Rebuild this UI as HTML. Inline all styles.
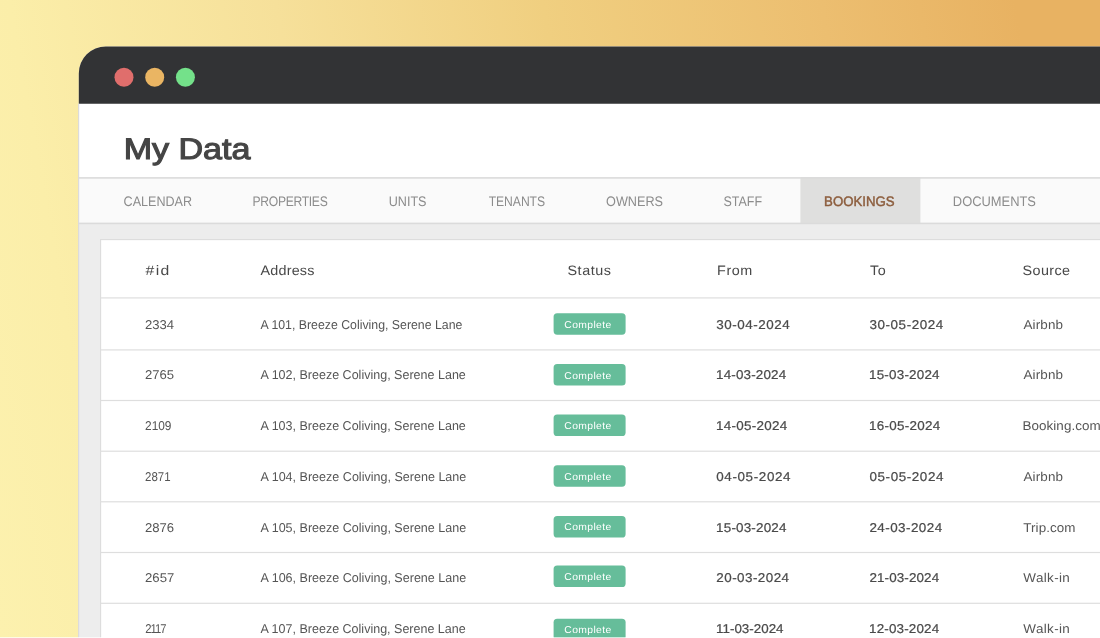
<!DOCTYPE html>
<html lang="en">
<head>
<meta charset="utf-8">
<title>My Data</title>
<style>
*{box-sizing:border-box;margin:0;padding:0}
html,body{width:1100px;height:638px;overflow:hidden}
body{position:relative;font-family:"Liberation Sans",sans-serif;background:linear-gradient(80deg,#fcf1ae 0%,#fbeea9 10%,#f6e09a 32%,#f0cf80 54%,#ecbe70 77%,#e8b262 93%,#e8b262 100%)}
.shapes{position:absolute;left:0;top:0;width:1100px;height:638px;display:block}
.txt{position:absolute;left:0;top:0;width:1100px;height:638px;will-change:transform}
.t{position:absolute;white-space:nowrap;line-height:1;transform-origin:0 0;font-weight:400;text-rendering:geometricPrecision}
.h1{font-size:29.8px;font-weight:400;color:#454545;-webkit-text-stroke:1.1px #454545}
.tab{font-size:13.8px;color:#8c8c8c}
.tab.on{font-weight:400;color:#8c5d3d;-webkit-text-stroke:0.45px #8c5d3d}
.th{font-size:13.7px;color:#484848}
.td{font-size:12.8px;color:#555555}
.dt{font-size:12.8px;color:#4a4a4a;-webkit-text-stroke:0.22px #4a4a4a}
.bt{font-size:9.9px;color:#fff}
</style>
</head>
<body>
<svg class="shapes" width="1100" height="638" viewBox="0 0 1100 638">
<path d="M78.8 700V73.4A27 27 0 0 1 105.8 46.4H1200V700Z" fill="#ffffff"/>
<path d="M78.8 103.7V73.4A27 27 0 0 1 105.8 46.4H1200V103.7Z" fill="#323335"/>
<circle cx="124.0" cy="77.25" r="9.5" fill="#e06e6c"/>
<circle cx="154.7" cy="77.25" r="9.5" fill="#eab563"/>
<circle cx="185.4" cy="77.25" r="9.5" fill="#74e18a"/>
<rect x="78.8" y="177.9" width="1100" height="45.5" fill="#fafafa"/>
<rect x="800.4" y="177.1" width="120" height="46.1" fill="#dfdfde"/>
<rect x="78.8" y="223.4" width="1100" height="500" fill="#ededed"/>
<rect x="78.8" y="177.1" width="1100" height="1.6" fill="#dbdbdb"/>
<rect x="78.8" y="222.6" width="1100" height="1.6" fill="#dbdbdb"/>
<rect x="78.1" y="103.7" width="1.1" height="600" fill="#d9d9de"/>
<rect x="100.6" y="239.6" width="1100" height="500" fill="#ffffff" stroke="#dcdcdc" stroke-width="1.1"/>
<rect x="100.6" y="297.3" width="1100" height="1.2" fill="#dedede"/>
<rect x="100.6" y="349.3" width="1100" height="1.2" fill="#dedede"/>
<rect x="100.6" y="399.9" width="1100" height="1.2" fill="#dedede"/>
<rect x="100.6" y="450.6" width="1100" height="1.2" fill="#dedede"/>
<rect x="100.6" y="501.2" width="1100" height="1.2" fill="#dedede"/>
<rect x="100.6" y="551.9" width="1100" height="1.2" fill="#dedede"/>
<rect x="100.6" y="602.7" width="1100" height="1.2" fill="#dedede"/>
<rect x="553.6" y="313.2" width="72" height="21.5" rx="3.6" fill="#66bd9a"/>
<rect x="553.6" y="364.1" width="72" height="21.5" rx="3.6" fill="#66bd9a"/>
<rect x="553.6" y="414.5" width="72" height="21.5" rx="3.6" fill="#66bd9a"/>
<rect x="553.6" y="465.2" width="72" height="21.5" rx="3.6" fill="#66bd9a"/>
<rect x="553.6" y="516.0" width="72" height="21.5" rx="3.6" fill="#66bd9a"/>
<rect x="553.6" y="565.5" width="72" height="21.5" rx="3.6" fill="#66bd9a"/>
<rect x="553.6" y="618.7" width="72" height="21.5" rx="3.6" fill="#66bd9a"/>
<rect x="0" y="637.2" width="1100" height="1" fill="#ffffff" opacity="0.85"/>
</svg>
<div class="txt">
<header><h1 class="t h1" style="left:123px;top:135px;letter-spacing:-0.027px;transform:translateX(0.68px) scaleX(1.1436)">My Data</h1></header>
<nav class="tabbar">
<span class="t tab" style="left:123px;top:195px;transform:translateX(0.55px) scaleX(0.9110)">CALENDAR</span>
<span class="t tab" style="left:252px;top:195px;letter-spacing:-0.357px;transform:translateX(0.54px) scaleX(0.8800)">PROPERTIES</span>
<span class="t tab" style="left:388px;top:195px;letter-spacing:-0.002px;transform:translateX(0.70px) scaleX(0.9127)">UNITS</span>
<span class="t tab" style="left:488px;top:195px;letter-spacing:-0.041px;transform:translateX(0.65px) scaleX(0.8800)">TENANTS</span>
<span class="t tab" style="left:606px;top:195px;transform:translateX(0.04px) scaleX(0.9178)">OWNERS</span>
<span class="t tab" style="left:723px;top:195px;transform:translateX(0.46px) scaleX(0.9036)">STAFF</span>
<span class="t tab on" style="left:824px;top:195px;transform:translateX(0.08px) scaleX(0.9588)">BOOKINGS</span>
<span class="t tab" style="left:952px;top:195px;transform:translateX(0.81px) scaleX(0.9352)">DOCUMENTS</span>
</nav>
<main class="grid">
<div class="row head">
<span class="t th" style="left:145px;top:264px;letter-spacing:1.157px;transform:translateX(0.62px) scaleX(1.1500)">#id</span>
<span class="t th" style="left:260px;top:264px;letter-spacing:0.174px;transform:translateX(0.56px) scaleX(1.0500)">Address</span>
<span class="t th" style="left:567px;top:264px;letter-spacing:0.493px;transform:translateX(0.52px) scaleX(1.0500)">Status</span>
<span class="t th" style="left:717px;top:264px;letter-spacing:0.555px;transform:translateX(0.04px) scaleX(1.0500)">From</span>
<span class="t th" style="left:869px;top:264px;letter-spacing:0.538px;transform:translateX(0.98px) scaleX(1.0500)">To</span>
<span class="t th" style="left:1022px;top:264px;letter-spacing:0.352px;transform:translateX(0.62px) scaleX(1.0500)">Source</span>
</div>
<div class="row">
<span class="t td" style="left:144px;top:319px;transform:translateX(1.00px) scaleX(1.0238)">2334</span>
<span class="t td" style="left:260px;top:319px;letter-spacing:-0.003px;transform:translateX(0.44px) scaleX(0.9625)">A 101, Breeze Coliving, Serene Lane</span>
<span class="t dt" style="left:716px;top:319px;letter-spacing:0.521px;transform:translateX(0.15px) scaleX(1.0500)">30-04-2024</span>
<span class="t dt" style="left:869px;top:319px;letter-spacing:0.542px;transform:translateX(0.42px) scaleX(1.0500)">30-05-2024</span>
<span class="t td" style="left:1023px;top:319px;letter-spacing:0.147px;transform:translateX(0.40px) scaleX(1.0500)">Airbnb</span>
<span class="t bt" style="left:564px;top:321px;letter-spacing:0.358px;transform:translateX(0.27px) scaleX(1.0500)">Complete</span>
</div>
<div class="row">
<span class="t td" style="left:144px;top:369px;transform:translateX(1.00px) scaleX(1.0230)">2765</span>
<span class="t td" style="left:260px;top:369px;transform:translateX(0.49px) scaleX(0.9783)">A 102, Breeze Coliving, Serene Lane</span>
<span class="t dt" style="left:716px;top:369px;letter-spacing:0.149px;transform:translateX(0.06px) scaleX(1.0500)">14-03-2024</span>
<span class="t dt" style="left:869px;top:369px;letter-spacing:0.190px;transform:translateX(0.03px) scaleX(1.0500)">15-03-2024</span>
<span class="t td" style="left:1023px;top:369px;letter-spacing:0.147px;transform:translateX(0.40px) scaleX(1.0500)">Airbnb</span>
<span class="t bt" style="left:564px;top:372px;letter-spacing:0.358px;transform:translateX(0.27px) scaleX(1.0500)">Complete</span>
</div>
<div class="row">
<span class="t td" style="left:145px;top:420px;letter-spacing:-0.003px;transform:translateX(0.04px) scaleX(0.9288)">2109</span>
<span class="t td" style="left:260px;top:420px;transform:translateX(0.49px) scaleX(0.9783)">A 103, Breeze Coliving, Serene Lane</span>
<span class="t dt" style="left:716px;top:420px;letter-spacing:0.255px;transform:translateX(0.06px) scaleX(1.0500)">14-05-2024</span>
<span class="t dt" style="left:869px;top:420px;letter-spacing:0.259px;transform:translateX(0.03px) scaleX(1.0500)">16-05-2024</span>
<span class="t td" style="left:1022px;top:420px;letter-spacing:0.049px;transform:translateX(0.50px) scaleX(1.0500)">Booking.com</span>
<span class="t bt" style="left:564px;top:422px;letter-spacing:0.358px;transform:translateX(0.27px) scaleX(1.0500)">Complete</span>
</div>
<div class="row">
<span class="t td" style="left:145px;top:471px;transform:translateX(0.08px) scaleX(0.8963)">2871</span>
<span class="t td" style="left:260px;top:471px;transform:translateX(0.49px) scaleX(0.9807)">A 104, Breeze Coliving, Serene Lane</span>
<span class="t dt" style="left:716px;top:471px;letter-spacing:0.586px;transform:translateX(0.27px) scaleX(1.0500)">04-05-2024</span>
<span class="t dt" style="left:869px;top:471px;letter-spacing:0.550px;transform:translateX(0.49px) scaleX(1.0500)">05-05-2024</span>
<span class="t td" style="left:1023px;top:471px;letter-spacing:0.147px;transform:translateX(0.40px) scaleX(1.0500)">Airbnb</span>
<span class="t bt" style="left:564px;top:473px;letter-spacing:0.358px;transform:translateX(0.27px) scaleX(1.0500)">Complete</span>
</div>
<div class="row">
<span class="t td" style="left:144px;top:522px;transform:translateX(0.99px) scaleX(1.0247)">2876</span>
<span class="t td" style="left:260px;top:522px;transform:translateX(0.49px) scaleX(0.9802)">A 105, Breeze Coliving, Serene Lane</span>
<span class="t dt" style="left:716px;top:522px;letter-spacing:0.180px;transform:translateX(0.06px) scaleX(1.0500)">15-03-2024</span>
<span class="t dt" style="left:869px;top:522px;letter-spacing:0.420px;transform:translateX(0.41px) scaleX(1.0500)">24-03-2024</span>
<span class="t td" style="left:1023px;top:522px;letter-spacing:0.058px;transform:translateX(0.29px) scaleX(1.0500)">Trip.com</span>
<span class="t bt" style="left:564px;top:523px;letter-spacing:0.358px;transform:translateX(0.27px) scaleX(1.0500)">Complete</span>
</div>
<div class="row">
<span class="t td" style="left:144px;top:572px;transform:translateX(0.99px) scaleX(1.0285)">2657</span>
<span class="t td" style="left:260px;top:572px;transform:translateX(0.49px) scaleX(0.9802)">A 106, Breeze Coliving, Serene Lane</span>
<span class="t dt" style="left:716px;top:572px;letter-spacing:0.432px;transform:translateX(0.28px) scaleX(1.0500)">20-03-2024</span>
<span class="t dt" style="left:869px;top:572px;letter-spacing:0.103px;transform:translateX(0.41px) scaleX(1.0500)">21-03-2024</span>
<span class="t td" style="left:1023px;top:572px;letter-spacing:0.347px;transform:translateX(0.35px) scaleX(1.0500)">Walk-in</span>
<span class="t bt" style="left:564px;top:573px;letter-spacing:0.358px;transform:translateX(0.27px) scaleX(1.0500)">Complete</span>
</div>
<div class="row">
<span class="t td" style="left:145px;top:623px;letter-spacing:-1.072px;transform:translateX(0.19px) scaleX(0.8800)">2117</span>
<span class="t td" style="left:260px;top:623px;transform:translateX(0.49px) scaleX(0.9778)">A 107, Breeze Coliving, Serene Lane</span>
<span class="t dt" style="left:716px;top:623px;transform:translateX(0.06px) scaleX(1.0461)">11-03-2024</span>
<span class="t dt" style="left:869px;top:623px;letter-spacing:0.144px;transform:translateX(0.02px) scaleX(1.0500)">12-03-2024</span>
<span class="t td" style="left:1023px;top:623px;letter-spacing:0.347px;transform:translateX(0.35px) scaleX(1.0500)">Walk-in</span>
<span class="t bt" style="left:564px;top:626px;letter-spacing:0.358px;transform:translateX(0.27px) scaleX(1.0500)">Complete</span>
</div>
</main>
</div>
</body>
</html>
